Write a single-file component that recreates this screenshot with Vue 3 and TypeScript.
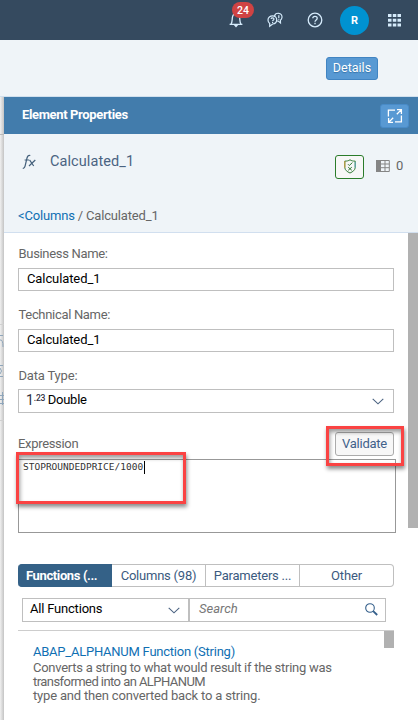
<script setup lang="ts">
import { ref } from 'vue'

interface Field {
  label: string
  value: string
}

const fields: Field[] = [
  { label: 'Business Name:', value: 'Calculated_1' },
  { label: 'Technical Name:', value: 'Calculated_1' },
]
const tabs: string[] = ['Functions (...', 'Columns (98)', 'Parameters ...', 'Other']
const activeTab = ref(0)
const expression = ref('STOPROUNDEDPRICE/1000')
</script>

<template>
  <div class="app">
    <header class="shell">
      <div class="bell">
        <svg width="14" height="16" viewBox="0 0 14 16" fill="none" stroke="#d5ebfb" stroke-width="1.3">
          <path d="M.6 12.4H13.4M2 12.2C3.4 10.3 3 8 3.4 5.4C3.8 2.8 5 1.6 7 1.6S10.2 2.8 10.6 5.4C11 8 10.6 10.3 12 12.2" />
          <path d="M4.8 13H9.2L7 15.4Z" fill="#d5ebfb" stroke="none" />
        </svg>
        <span class="badge">24</span>
      </div>
      <svg class="chat" width="16" height="16" viewBox="0 0 16 16" fill="none" stroke="#d5ebfb" stroke-width="1.2">
        <path d="M7.5 4.1C8 2 9.8 1.1 11.7 1.3C13.8 1.5 15.2 3.2 15 5.3C14.9 6.5 14.3 7.6 13.4 8.2L13.5 11L11.2 9.1L10 9" />
        <path d="M5.6 3.8C7.9 3.8 9.7 5.5 9.7 7.7S7.9 11.8 5.6 12L2.7 14.3V11.4C1.5 10.6 1 9.4 1 7.9C1 5.5 3.1 3.8 5.6 3.8Z" />
        <path d="M4 6.8C4.3 5.6 7 5.4 7 7.1C7 8.1 5.6 8 5.6 9.3M5.6 10V11M11.8 3.2V6.2M11.8 7V7.8" />
      </svg>
      <svg class="help" width="16" height="16" viewBox="0 0 16 16" fill="none" stroke="#d5ebfb" stroke-width="1.3">
        <circle cx="8" cy="8" r="6.8" />
        <path d="M5.8 6.3C5.8 3.7 10.2 3.7 10.2 6.2C10.2 8 8 7.8 8 9.8M8 10.8V12.2" />
      </svg>
      <span class="avatar">R</span>
      <svg class="grid" width="13" height="13" viewBox="0 0 13 13" fill="#d5ebfb">
        <path d="M0 0h3.5v3H0zM4.8 0h3.5v3H4.8zM9.5 0H13v3H9.5zM0 4.7h3.5v3H0zM4.8 4.7h3.5v3H4.8zM9.5 4.7H13v3H9.5zM0 9.4h3.5v3H0zM4.8 9.4h3.5v3H4.8zM9.5 9.4H13v3H9.5z" />
      </svg>
    </header>

    <div class="toolbar"><button class="details">Details</button></div>

    <div class="main">
      <aside class="backdrop">
        <svg width="4" height="623" viewBox="0 0 4 623" fill="none" stroke="#8fa6bb">
          <path d="M0 37.5H4" stroke="#bbb" />
          <path d="M0 227.5H4M0 323.5H4" stroke="#d0d0d0" />
          <path d="M0 238.5H3M0 243Q3 242 3 250M0 268.5H3M0 279.5H3M0 271Q3 274 0 277M0 298.5H4M0 302.5H4M0 306.5H4M2.5 295V308" />
        </svg>
      </aside>
      <section class="panel">
        <div class="panel-title">
          <h1>Element Properties</h1>
          <button class="expand">
            <svg width="16" height="16" viewBox="0 0 16 16" fill="none" stroke="#fff" stroke-width="1.3">
              <path d="M8 2.2H1.4V8.6M8 13.8H14.4V7.6M10 1.6H14.4V6M14.4 1.6L9.8 6.2M1.6 10V14.4H6M1.6 14.4L6.2 9.8" />
            </svg>
          </button>
        </div>

        <div class="summary">
          <div class="object">
            <svg class="fx" width="15" height="16" viewBox="0 0 15 16" fill="none" stroke="#45617c" stroke-width="1.2">
              <path d="M.8 14.3C2 14.5 2.7 13.6 3.1 12L5 4C5.5 2 6.3 1 8.3 1.5M2.6 6H7.3M7.7 6.2L11.7 12M13.3 6L7 12" />
            </svg>
            <span class="object-name">Calculated_1</span>
            <button class="shield">
              <svg width="12" height="15" viewBox="0 0 12 15" fill="none" stroke="#347c38" stroke-width="1">
                <path d="M6 .8C4.5 1.8 2.8 2.2 .8 2.1V8.7C1 11 3 12.7 6 14C9 12.7 11 11 11.2 8.7V2.1C9.2 2.2 7.5 1.8 6 .8Z" />
                <path d="M4 5.2L5.3 6.5L8.4 3.6M4.2 8.2L7.8 11.3M7.8 8.2L4.2 11.3" />
                <path d="M.8 2.2V8.7" stroke="#c99a38" />
                <path d="M11.2 3V8.7" stroke="#5aa4b4" />
              </svg>
            </button>
            <svg class="table" width="14" height="12" viewBox="0 0 14 12" fill="none" stroke="#858585">
              <path d="M0 0H5V12H0Z" fill="#858585" stroke="none" />
              <path d="M0 .5H13.3V11.5H0M5 4H13.3M5 7.7H13.3M9 .5V11.5" />
            </svg>
            <span class="count">0</span>
          </div>
          <div class="crumbs"><a>&lt;Columns</a> / Calculated_1</div>
        </div>

        <div class="content">
          <div class="form">
            <div v-for="f in fields" :key="f.label" class="field">
              <label>{{ f.label }}</label>
              <div class="box">{{ f.value }}</div>
            </div>
            <div class="field type">
              <label>Data Type:</label>
              <div class="box select">
                <span class="num">1<sup>.23</sup></span><span class="double">Double</span>
                <svg width="12" height="7" viewBox="0 0 12 7" fill="none" stroke="#4b6382" stroke-width="1.1"><path d="M.7 .8L6 5.8L11.3 .8" /></svg>
              </div>
            </div>

            <div class="expr-head">
              <label>Expression</label>
              <button class="validate">Validate</button>
              <i class="mark mark-validate"></i>
            </div>
            <div class="editor">
              <code>{{ expression }}</code><i class="caret"></i>
              <i class="mark mark-expression"></i>
            </div>

            <div class="tabs">
              <button v-for="(t, i) in tabs" :key="t" :class="['tab', { active: i === activeTab }]" @click="activeTab = i">{{ t }}</button>
            </div>
            <div class="filters">
              <div class="filter">
                <span>All Functions</span>
                <svg width="12" height="7" viewBox="0 0 12 7" fill="none" stroke="#4b6382" stroke-width="1.1"><path d="M.7 .8L6 5.8L11.3 .8" /></svg>
              </div>
              <div class="search">
                <em>Search</em>
                <svg width="13" height="13" viewBox="0 0 13 13" fill="none" stroke="#345f8b" stroke-width="1.1"><circle cx="5" cy="5" r="4.3" /><path d="M8.2 8.2L12.2 12" stroke-width="1.8" /></svg>
              </div>
            </div>
            <div class="list">
              <div class="item">
                <a>ABAP_ALPHANUM Function (String)</a>
                <p class="l1">Converts a string to what would result if the string was</p>
                <p class="l2">transformed into an ALPHANUM</p>
                <p class="l3">type and then converted back to a string.</p>
              </div>
              <div class="list-thumb"></div>
            </div>
          </div>
          <div class="scroll"><div class="thumb"></div></div>
        </div>
      </section>
    </div>
  </div>
</template>

<style>
body { overflow: hidden; }
</style>

<style scoped>
* { box-sizing: border-box; }
.app { width: 418px; height: 720px; display: flex; flex-direction: column; overflow: hidden; font: 13px/16px Roboto, "Liberation Sans", sans-serif; color: #666; background: #fff; }
button { font: inherit; letter-spacing: inherit; padding: 0; margin: 0; }
svg { display: block; flex: none; }
.shell { height: 40px; flex: none; background: #354a5f; display: flex; align-items: center; padding-left: 229px; }
.bell { position: relative; width: 14px; margin-right: 24px; }
.badge { position: absolute; left: 3px; top: -10px; width: 22px; height: 16px; border-radius: 8px; background: #d04343; color: #fff; font-size: 10.5px; font-weight: 500; line-height: 17px; text-align: center; }
.help { margin-left: 24px; }
.avatar { width: 29px; height: 29px; margin-left: 17px; border-radius: 50%; background: #0092d1; color: #fff; font-size: 11px; font-weight: 700; line-height: 30px; text-align: center; }
.grid { margin-left: 19px; }
.toolbar { height: 57px; flex: none; background: #eff4f8; border-bottom: 1px solid #d1e0ee; display: flex; padding: 17px 0 0 326px; }
.details { width: 52px; height: 23px; border: 1px solid #4184c2; border-radius: 3px; background: #5899d3; color: #fff; font-size: 12.5px; line-height: 19px; padding-bottom: 2px; text-shadow: 0 1px 1px #3673a8; }
.main { flex: 1; min-height: 0; display: flex; }
.backdrop { width: 4px; flex: none; background: linear-gradient(to right, #f0f0f0, #c4c4c4); }
.panel { flex: 1; display: flex; flex-direction: column; }
.panel-title { height: 37px; flex: none; background: #427cac; display: flex; align-items: center; justify-content: space-between; padding: 0 9px 0 18px; }
h1 { margin: -2px 0 0; color: #fff; font-size: 13px; font-weight: 700; line-height: 16px; letter-spacing: -.36px; }
.expand { width: 29px; height: 24px; border: 1px solid #488bc8; border-radius: 3px; background: #5899d3; display: grid; place-items: center; }
.summary { height: 99px; flex: none; background: #eff4f8; border-bottom: 1px solid #d1dfef; }
.object { height: 65px; display: flex; align-items: center; padding-left: 18px; }
.fx { margin-top: -10px; }
.object-name { width: 285px; margin: -9px 0 0 13px; font-size: 14.5px; color: #4a6382; letter-spacing: .08px; }
.shield { width: 29px; height: 24px; flex: none; border: 1px solid #2b7c2b; border-radius: 3px; background: #f7f7f7; display: grid; place-items: center; }
.table { margin-left: 12px; margin-top: -2px; }
.count { margin: -2px 0 0 6px; }
.crumbs { padding: 9px 0 0 14px; letter-spacing: -.17px; }
a { color: #0f6fb3; }
.content { flex: 1; min-height: 0; display: flex; }
.form { width: 404px; padding: 13px 0 0 14px; }
.field { height: 61px; }
label { display: block; height: 22px; line-height: 15px; letter-spacing: -.32px; }
.field > label { padding-left: .5px; }
.box { width: 376px; height: 23px; border: 1px solid #bfbfbf; background: #fff; color: #000; padding: 0 8px; line-height: 20px; letter-spacing: -.1px; }
.type { height: 64px; }
.type label { height: 21px; letter-spacing: -.18px; }
.box.select { height: 24px; display: flex; align-items: center; padding: 0 9px 2px 7px; }
.box.select svg { margin-top: 2px; }
.num { font-size: 14px; color: #334; line-height: 18px; }
.num sup { font-size: 8.5px; font-weight: 500; line-height: 0; vertical-align: 4px; letter-spacing: -.2px; }
.double { margin-left: 2.5px; flex: 1; letter-spacing: -.25px; }
.expr-head { height: 27px; position: relative; display: flex; width: 376px; justify-content: space-between; }
.expr-head label { line-height: 18px; padding-top: 3px; }
.validate { width: 59px; height: 24px; flex: none; border: 1px solid #ababab; border-radius: 3px; background: #f7f7f7; color: #41618a; line-height: 19px; padding-bottom: 2px; letter-spacing: -.25px; }
.mark { position: absolute; border: 3px solid #fa4343; box-shadow: 1px 3px 4px rgba(0,0,0,.45), inset 1px 3px 4px rgba(0,0,0,.4); pointer-events: none; }
.mark-validate { left: 308px; top: -6px; width: 78px; height: 40px; z-index: 2; }
.editor { position: relative; width: 378px; height: 74px; border: 1px solid #989898; padding: 1px 0 0 4px; display: flex; }
code { font: 9.5px/12px "DejaVu Sans Mono", monospace; color: #333; }
.caret { width: 1px; height: 13px; background: #000; margin-left: 1px; }
.mark-expression { left: -3px; top: -8px; width: 170px; height: 52px; }
.tabs { width: 376px; height: 23px; margin-top: 31px; display: grid; grid-template-columns: repeat(4, 94px); }
.tab { min-width: 0; border: 1px solid #bfbfbf; border-left-width: 0; background: #fff; color: #3b5a80; line-height: 19px; letter-spacing: -.22px; white-space: nowrap; overflow: hidden; }
.tab:first-child { border-radius: 4px 0 0 4px; }
.tab:last-child { border-radius: 0 4px 4px 0; letter-spacing: -.1px; }
.tab.active { background: #346187; border-color: #346187; color: #fff; font-weight: 700; text-align: left; padding-left: 8px; letter-spacing: -.38px; }
.filters { display: flex; margin: 11px 0 0 4px; height: 24px; }
.filter { width: 167px; border: 1px solid #bfbfbf; display: flex; justify-content: space-between; align-items: center; padding: 0 8px 0 7px; color: #000; }
.filter span { margin-top: -3px; letter-spacing: -.2px; }
.search { width: 197px; border: 1px solid #bfbfbf; display: flex; justify-content: space-between; align-items: center; padding: 0 7px 0 9px; color: #777; }
.search em { margin-top: -2px; }
.search svg { margin-top: -1px; }
.list { width: 376px; height: 90px; margin-top: 8px; border-top: 1px solid #cdcdcd; display: flex; justify-content: space-between; }
.item { padding: 13px 0 0 15px; line-height: 14px; white-space: nowrap; }
.item a { display: block; line-height: 16px; margin-bottom: 1px; letter-spacing: -.24px; }
p { margin: 0; }
.l1 { letter-spacing: -.27px; }
.l2 { letter-spacing: -.56px; }
.l3 { letter-spacing: -.18px; }
.list-thumb { width: 10px; height: 17px; background: #b1b1b1; flex: none; }
.scroll { width: 10px; }
.thumb { height: 295px; background: #b1b1b1; }
</style>
